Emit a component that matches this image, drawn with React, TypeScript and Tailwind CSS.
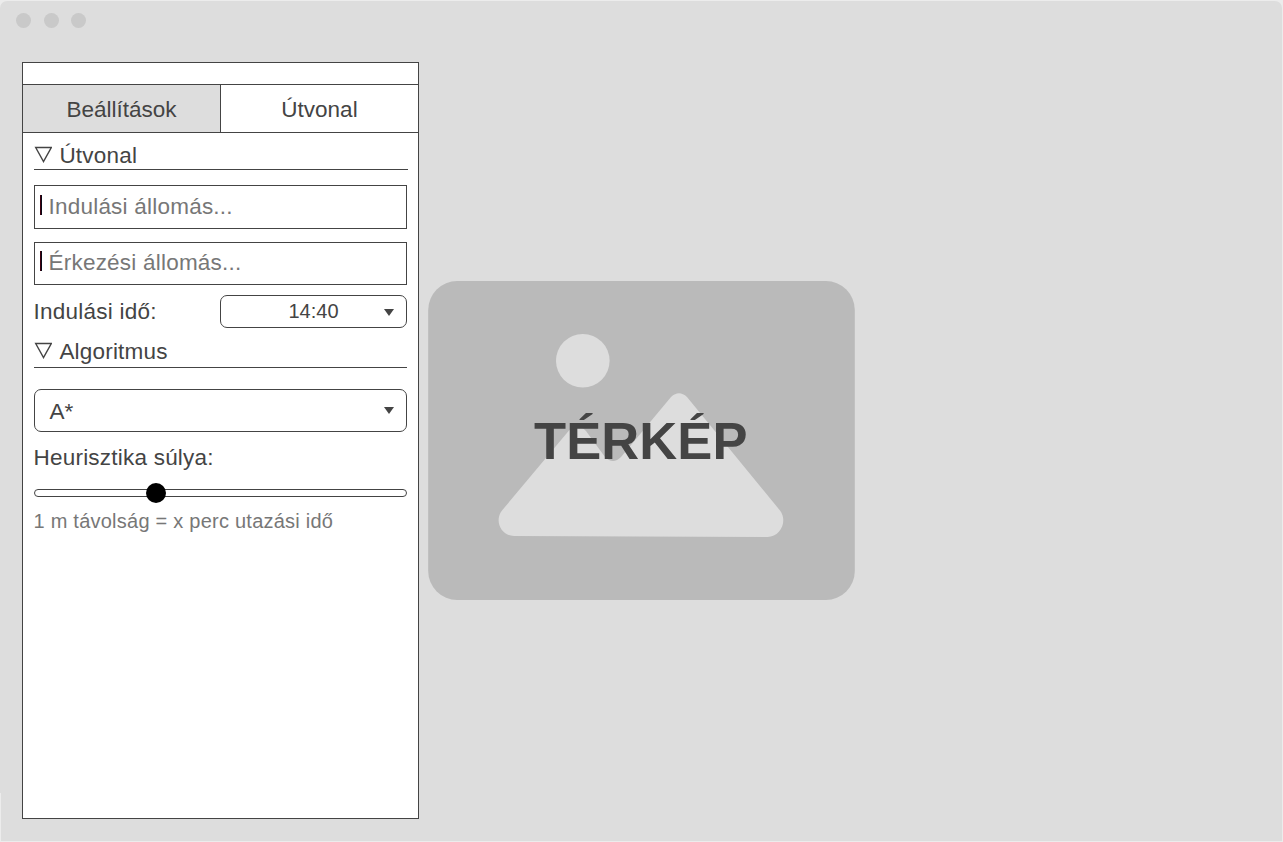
import type { ReactNode } from 'react';

function SectionHeading({ children }: { children: ReactNode }) {
  return (
    <h2 className="flex h-[26px] items-end gap-[7px] text-[22.5px] leading-[26px] tracking-[0.2px]">
      <svg className="mb-[6px]" width="18" height="17" viewBox="0 0 18 17" fill="none" stroke="#444" strokeWidth="1.4">
        <path d="M1.700 1.500H17.300L9.500 15.500Z" />
      </svg>
      <span className="ml-[0.4px]">{children}</span>
    </h2>
  );
}

function StationField({ placeholder }: { placeholder: string }) {
  return (
    <div className="flex w-[373px] items-start border border-[#444] pl-[5px]">
      <span className="h-5 w-[2px] border-l border-[#400010] bg-[#0a0a18]" />
      <span className="-mt-px ml-[6.5px] text-[22.5px] leading-[26px] tracking-[0.22px] text-[#777]">{placeholder}</span>
    </div>
  );
}

function Arrow() {
  return (
    <svg width="10" height="7" viewBox="0 0 10 7" fill="#444">
      <path d="M0 0H10L5 7Z" />
    </svg>
  );
}

function MapPlaceholder() {
  return (
    <div className="relative flex h-[319px] w-[427px] items-center justify-center">
      <svg className="absolute inset-0" width="427" height="319" viewBox="428 281 427 319">
        <rect x="428.2" y="281" width="426.6" height="319" rx="29" fill="#bababa" />
        <circle cx="582.8" cy="360.7" r="26.8" fill="#ddd" />
        <path
          fill="#ddd"
          d="M502 510.500L569 430.500Q577.500 423 586 431L605 457Q613 465 621 457L671 397Q679 389.500 687 397L780 510.500C788 521 780.500 537 767.500 537L514 536C501 536 494 521 502 510.500Z"
        />
      </svg>
      <span className="relative mr-[1.5px] text-[52.5px] font-bold leading-[60px] tracking-[0.1px]">TÉRKÉP</span>
    </div>
  );
}

export default function App() {
  return (
    <div className="h-[842px] w-[1283px] overflow-hidden bg-[#ececec] pr-px pt-px pb-px font-['Liberation_Sans',Arial,sans-serif] text-[#444]">
      <div className="relative h-[840px] rounded-t-[7px] bg-[#ddd] pl-[16px] pt-[12px]">
        <div className="absolute left-0 top-[792px] h-12 w-px bg-[#ececec]" />
        <div className="flex gap-[12.500px]">
          <span className="size-[15px] rounded-full bg-[#c9c9c9]" />
          <span className="size-[15px] rounded-full bg-[#c9c9c9]" />
          <span className="size-[15px] rounded-full bg-[#c9c9c9]" />
        </div>
        <div className="mt-[34px] flex pl-[6px]">
          <aside className="h-[757px] w-[397px] shrink-0 border border-[#444] bg-white">
            <div className="h-[21px]" />
            <div className="flex h-[49px] border-y border-[#444] text-[22.5px] leading-[49px]">
              <div className="w-[198px] border-r border-[#444] bg-[#ddd] text-center">Beállítások</div>
              <div className="flex-1 text-center">Útvonal</div>
            </div>
            <div className="flex flex-col pl-[11px]">
              <div className="flex h-[37px] w-[374px] flex-col justify-end border-b border-[#444]">
                <SectionHeading>Útvonal</SectionHeading>
              </div>
              <div className="mt-[15px] grid h-[44px] *:pt-[9px]">
                <StationField placeholder="Indulási állomás..." />
              </div>
              <div className="mt-[13px] grid h-[43px] *:pt-[8px]">
                <StationField placeholder="Érkezési állomás..." />
              </div>
              <div className="mt-[10px] flex h-[33px] w-[373px] items-center justify-between">
                <span className="-ml-[0.5px] text-[22.5px] tracking-[0.25px]">Indulási idő:</span>
                <div className="flex h-[33px] w-[187px] items-center rounded-[7px] border border-[#444] pr-[12px]">
                  <span className="mb-[2px] ml-[22px] flex-1 text-center text-[20px]">14:40</span>
                  <span className="pt-[2px]">
                    <Arrow />
                  </span>
                </div>
              </div>
              <div className="flex h-[40px] w-[373px] flex-col justify-end border-b border-[#444] pb-[2px]">
                <SectionHeading>Algoritmus</SectionHeading>
              </div>
              <div className="mt-[21px] flex h-[43px] w-[373px] items-center justify-between rounded-[7px] border border-[#444] pl-[14.5px] pr-[12px] text-[22.5px]">
                <span className="pt-[2px]">A*</span>
                <Arrow />
              </div>
              <span className="-ml-[0.5px] mt-[13px] text-[22.5px] leading-[26px] tracking-[0.22px]">Heurisztika súlya:</span>
              <div className="mt-[12px] flex h-5 w-[373px] items-center">
                <div className="flex h-2 w-full items-center rounded-full border border-[#444] pl-[111px]">
                  <span className="size-5 shrink-0 rounded-full bg-black" />
                </div>
              </div>
              <span className="-ml-[0.5px] mt-[6px] text-[20px] leading-6 tracking-[0.24px] text-[#777]">
                1 m távolság = x perc utazási idő
              </span>
            </div>
          </aside>
          <main className="ml-[9px] mt-[219px]">
            <MapPlaceholder />
          </main>
        </div>
      </div>
    </div>
  );
}
